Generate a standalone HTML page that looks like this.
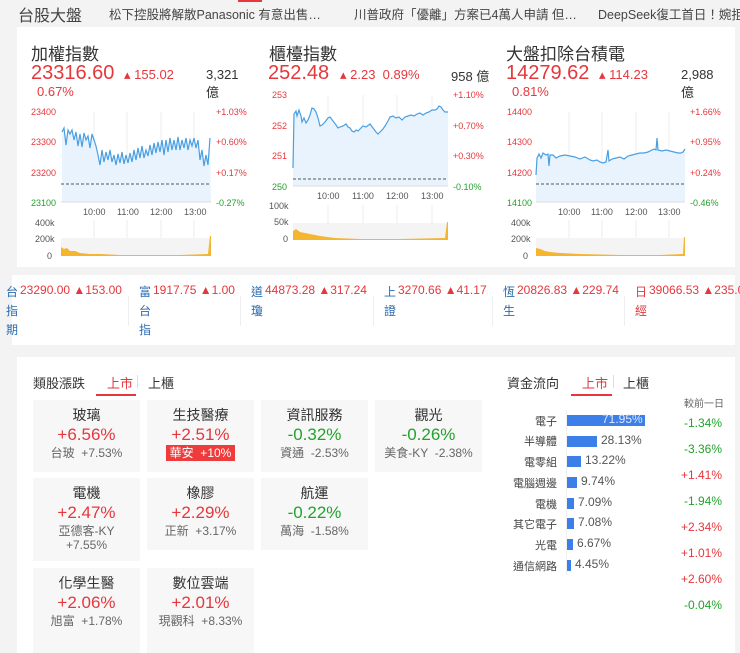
<!DOCTYPE html>
<html><head><meta charset="utf-8">
<style>
*{margin:0;padding:0;box-sizing:border-box}
body{width:740px;height:653px;overflow:hidden;background:#f3f3f3;font-family:"Liberation Sans","Noto Sans CJK TC",sans-serif;position:relative;color:#333}
.a{position:absolute;white-space:nowrap}
.card{position:absolute;background:#fff}
.r{color:#e5373c}.g{color:#22a22b}.bl{color:#2a6bb0}
.t{font-size:17px;color:#333}
.big{font-size:20px;color:#e5373c}
.sm{font-size:13px}
.tile{position:absolute;background:#f7f7f7;width:107px;text-align:center}
.tile .n{font-size:14px;color:#333;margin-top:6px;line-height:18px}
.tile .p{font-size:17px;line-height:22px}
.tile .s{font-size:12px;color:#666;line-height:14px}
.lab{position:absolute;right:183px;font-size:11px;color:#444;text-align:right}
.bar{position:absolute;left:567px;height:11px;background:#3d7fe8}
.bv{position:absolute;font-size:12px;color:#555}
.cv{position:absolute;right:18px;font-size:12px}
</style></head><body>
<div class="a" style="left:238px;top:0;width:24px;height:2px;background:#e5373c"></div>
<div class="a" style="left:18px;top:2px;font-size:16px;color:#444">台股大盤</div>
<div class="a" style="left:109px;top:4px;font-size:12.5px;color:#444">松下控股將解散Panasonic 有意出售…</div>
<div class="a" style="left:354px;top:4px;font-size:12.5px;color:#444">川普政府「優離」方案已4萬人申請 但…</div>
<div class="a" style="left:598px;top:4px;font-size:12.5px;color:#444">DeepSeek復工首日！婉拒</div>

<div class="card" style="left:17px;top:27px;width:718px;height:240px"></div>

<div class="a t" style="left:31px;top:40px">加權指數</div>
<div class="a big" style="left:31px;top:62px">23316.60</div>
<div class="a sm r" style="left:124px;top:67px">▴ 155.02</div>
<div class="a sm r" style="left:37px;top:84px">0.67%</div>
<div class="a sm" style="left:206px;top:66px;line-height:18px">3,321<br>億</div>
<div class="a t" style="left:269px;top:40px">櫃檯指數</div>
<div class="a big" style="left:268px;top:62px">252.48</div>
<div class="a sm r" style="left:340px;top:67px">▴ 2.23&nbsp;&nbsp;0.89%</div>
<div class="a sm" style="left:451px;top:66px">958 億</div>
<div class="a t" style="left:506px;top:40px">大盤扣除台積電</div>
<div class="a big" style="left:506px;top:62px">14279.62</div>
<div class="a sm r" style="left:599px;top:67px">▴ 114.23</div>
<div class="a sm r" style="left:512px;top:84px">0.81%</div>
<div class="a sm" style="left:681px;top:66px;line-height:18px">2,988<br>億</div>

<svg class="a" style="left:0;top:0" width="740" height="270" font-family="Liberation Sans" font-size="9">
<g>
<g stroke="#eee" stroke-width="1"><line x1="94" y1="112" x2="94" y2="202"/><line x1="127" y1="112" x2="127" y2="202"/><line x1="161" y1="112" x2="161" y2="202"/><line x1="194" y1="112" x2="194" y2="202"/><line x1="94" y1="220" x2="94" y2="256"/><line x1="127" y1="220" x2="127" y2="256"/><line x1="161" y1="220" x2="161" y2="256"/><line x1="194" y1="220" x2="194" y2="256"/></g>
<polygon fill="#e9f3fd" points="62,202 62,132 64,128 66,145 68,130 70,134 72,130 74,140 76,132 78,146 80,134 82,147 84,133 86,140 88,136 90,148 92,134 94,140 96,146 98,155 100,165 102,150 104,162 106,152 108,160 110,150 112,162 114,155 116,165 118,154 120,163 122,152 124,164 126,155 128,163 130,153 132,162 134,150 136,160 138,148 140,158 142,146 144,158 146,150 148,156 150,145 152,155 154,143 156,153 158,142 160,152 162,140 164,155 166,140 168,152 170,138 172,150 174,140 176,150 178,137 180,150 182,140 184,148 186,138 188,150 190,140 192,146 194,138 196,148 198,140 200,160 202,150 204,166 206,155 208,165 210,138 211,202"/>
<polyline fill="none" stroke="#4a9fe2" stroke-width="1.2" points="62,132 64,128 66,145 68,130 70,134 72,130 74,140 76,132 78,146 80,134 82,147 84,133 86,140 88,136 90,148 92,134 94,140 96,146 98,155 100,165 102,150 104,162 106,152 108,160 110,150 112,162 114,155 116,165 118,154 120,163 122,152 124,164 126,155 128,163 130,153 132,162 134,150 136,160 138,148 140,158 142,146 144,158 146,150 148,156 150,145 152,155 154,143 156,153 158,142 160,152 162,140 164,155 166,140 168,152 170,138 172,150 174,140 176,150 178,137 180,150 182,140 184,148 186,138 188,150 190,140 192,146 194,138 196,148 198,140 200,160 202,150 204,166 206,155 208,165 210,138"/>
<line x1="61" y1="184" x2="211" y2="184" stroke="#555" stroke-dasharray="3,2"/>
<line x1="61" y1="202" x2="211" y2="202" stroke="#ddd"/>
<g fill="#e5373c"><text x="31" y="115">23400</text><text x="31" y="145">23300</text><text x="31" y="176">23200</text><text x="216" y="115">+1.03%</text><text x="216" y="145">+0.60%</text><text x="216" y="176">+0.17%</text></g>
<g fill="#22a22b"><text x="31" y="206">23100</text><text x="216" y="206">-0.27%</text></g>
<g fill="#555"><text x="83" y="215">10:00</text><text x="117" y="215">11:00</text><text x="150" y="215">12:00</text><text x="184" y="215">13:00</text><text x="35" y="226">400k</text><text x="35" y="242">200k</text><text x="47" y="259">0</text></g>
<rect x="61" y="238" width="150" height="17" fill="#f4f4f4"/>
<polygon fill="#f5b52e" points="61,256 61,247 64,249 67,248 70,251 75,251 80,253 90,254 100,254 120,255 150,255 180,255 208,254 210,236 211,236 211,256"/>
</g>
<g>
<g stroke="#eee"><line x1="328" y1="95" x2="328" y2="186"/><line x1="363" y1="95" x2="363" y2="186"/><line x1="397" y1="95" x2="397" y2="186"/><line x1="432" y1="95" x2="432" y2="186"/><line x1="328" y1="205" x2="328" y2="240"/><line x1="363" y1="205" x2="363" y2="240"/><line x1="397" y1="205" x2="397" y2="240"/><line x1="432" y1="205" x2="432" y2="240"/></g>
<polygon fill="#e9f3fd" points="293,186 293,168 294,114 296,111 297,116 299,110 301,116 302,122 304,118 306,123 308,120 310,115 312,108 314,109 316,112 318,118 320,126 322,125 325,122 328,118 330,117 333,121 336,125 338,128 340,127 343,126 346,124 348,127 350,128 352,131 354,132 356,130 358,131 360,129 363,126 366,127 370,124 373,128 376,132 378,134 380,132 383,129 385,126 388,121 390,117 393,116 396,118 399,117 402,120 405,117 408,116 411,115 414,116 417,114 420,113 423,115 426,113 429,112 432,110 435,110 437,109 439,106 441,107 443,110 445,112 448,112 448,186"/>
<polyline fill="none" stroke="#4a9fe2" stroke-width="1.2" points="293,168 294,114 296,111 297,116 299,110 301,116 302,122 304,118 306,123 308,120 310,115 312,108 314,109 316,112 318,118 320,126 322,125 325,122 328,118 330,117 333,121 336,125 338,128 340,127 343,126 346,124 348,127 350,128 352,131 354,132 356,130 358,131 360,129 363,126 366,127 370,124 373,128 376,132 378,134 380,132 383,129 385,126 388,121 390,117 393,116 396,118 399,117 402,120 405,117 408,116 411,115 414,116 417,114 420,113 423,115 426,113 429,112 432,110 435,110 437,109 439,106 441,107 443,110 445,112 448,112"/>
<line x1="293" y1="179" x2="448" y2="179" stroke="#555" stroke-dasharray="3,2"/>
<line x1="293" y1="186" x2="448" y2="186" stroke="#ddd"/>
<g fill="#e5373c"><text x="272" y="98">253</text><text x="272" y="129">252</text><text x="272" y="159">251</text><text x="453" y="98">+1.10%</text><text x="453" y="129">+0.70%</text><text x="453" y="159">+0.30%</text></g>
<g fill="#22a22b"><text x="272" y="190">250</text><text x="453" y="190">-0.10%</text></g>
<g fill="#555"><text x="317" y="199">10:00</text><text x="352" y="199">11:00</text><text x="386" y="199">12:00</text><text x="421" y="199">13:00</text><text x="269" y="209">100k</text><text x="274" y="225">50k</text><text x="283" y="242">0</text></g>
<rect x="293" y="223" width="155" height="17" fill="#f4f4f4"/>
<polygon fill="#f5b52e" points="293,240 293,231 296,229 300,232 305,233 310,234 320,236 335,238 360,239 400,239 445,238 447,222 448,222 448,240"/>
</g>
<g>
<g stroke="#eee"><line x1="569" y1="112" x2="569" y2="202"/><line x1="602" y1="112" x2="602" y2="202"/><line x1="636" y1="112" x2="636" y2="202"/><line x1="669" y1="112" x2="669" y2="202"/><line x1="569" y1="220" x2="569" y2="256"/><line x1="602" y1="220" x2="602" y2="256"/><line x1="636" y1="220" x2="636" y2="256"/><line x1="669" y1="220" x2="669" y2="256"/></g>
<polygon fill="#e9f3fd" points="536,202 536,175 537,158 539,154 541,158 543,153 546,155 548,154 549,166 550,155 553,155 556,158 560,156 565,155 570,156 575,157 580,159 585,157 590,160 593,161 597,160 600,162 603,163 606,162 608,150 609,161 612,159 616,158 620,157 624,159 628,156 632,155 636,154 640,153 644,153 648,152 652,150 654,149 656,150 657,138 658,150 662,151 666,150 670,151 674,152 678,153 681,153 683,152 685,149 685,202"/>
<polyline fill="none" stroke="#4a9fe2" stroke-width="1.2" points="536,175 537,158 539,154 541,158 543,153 546,155 548,154 549,166 550,155 553,155 556,158 560,156 565,155 570,156 575,157 580,159 585,157 590,160 593,161 597,160 600,162 603,163 606,162 608,150 609,161 612,159 616,158 620,157 624,159 628,156 632,155 636,154 640,153 644,153 648,152 652,150 654,149 656,150 657,138 658,150 662,151 666,150 670,151 674,152 678,153 681,153 683,152 685,149"/>
<line x1="536" y1="184" x2="685" y2="184" stroke="#555" stroke-dasharray="3,2"/>
<line x1="536" y1="202" x2="685" y2="202" stroke="#ddd"/>
<g fill="#e5373c"><text x="507" y="115">14400</text><text x="507" y="145">14300</text><text x="507" y="176">14200</text><text x="690" y="115">+1.66%</text><text x="690" y="145">+0.95%</text><text x="690" y="176">+0.24%</text></g>
<g fill="#22a22b"><text x="507" y="206">14100</text><text x="690" y="206">-0.46%</text></g>
<g fill="#555"><text x="558" y="215">10:00</text><text x="591" y="215">11:00</text><text x="625" y="215">12:00</text><text x="658" y="215">13:00</text><text x="511" y="226">400k</text><text x="511" y="242">200k</text><text x="523" y="259">0</text></g>
<rect x="536" y="238" width="149" height="17" fill="#f4f4f4"/>
<polygon fill="#f5b52e" points="536,256 536,248 540,249 545,251 550,252 560,253 580,254 620,255 660,255 683,254 684,237 685,237 685,256"/>
</g>
</svg>

<div class="card" style="left:12px;top:275px;width:723px;height:70px"></div>
<div class="a" style="left:6px;top:283px;font-size:12px;line-height:19px"><span class="bl">台<br>指<br>期</span></div>
<div class="a r" style="left:20px;top:283px;font-size:12px">23290.00 ▲153.00</div>
<div class="a" style="left:139px;top:283px;font-size:12px;line-height:19px"><span class="bl">富<br>台<br>指</span></div>
<div class="a r" style="left:153px;top:283px;font-size:12px">1917.75 ▲1.00</div>
<div class="a" style="left:251px;top:283px;font-size:12px;line-height:19px"><span class="bl">道<br>瓊</span></div>
<div class="a r" style="left:265px;top:283px;font-size:12px">44873.28 ▲317.24</div>
<div class="a" style="left:384px;top:283px;font-size:12px;line-height:19px"><span class="bl">上<br>證</span></div>
<div class="a r" style="left:398px;top:283px;font-size:12px">3270.66 ▲41.17</div>
<div class="a" style="left:503px;top:283px;font-size:12px;line-height:19px"><span class="bl">恆<br>生</span></div>
<div class="a r" style="left:517px;top:283px;font-size:12px">20826.83 ▲229.74</div>
<div class="a" style="left:635px;top:283px;font-size:12px;line-height:19px"><span class="r">日<br>經</span></div>
<div class="a r" style="left:649px;top:283px;font-size:12px">39066.53 ▲235.0</div>
<div class="a" style="left:128px;top:296px;width:1px;height:30px;background:#eee"></div>
<div class="a" style="left:240px;top:296px;width:1px;height:30px;background:#eee"></div>
<div class="a" style="left:373px;top:296px;width:1px;height:30px;background:#eee"></div>
<div class="a" style="left:492px;top:296px;width:1px;height:30px;background:#eee"></div>
<div class="a" style="left:624px;top:296px;width:1px;height:30px;background:#eee"></div>

<div class="card" style="left:17px;top:357px;width:718px;height:296px"></div>
<div class="a" style="left:33px;top:373px;font-size:13px">類股漲跌</div>
<div class="a r" style="left:107px;top:373px;font-size:13px">上市</div>
<div class="a" style="left:137px;top:375px;width:1px;height:13px;background:#ddd"></div>
<div class="a" style="left:148px;top:373px;font-size:13px">上櫃</div>
<div class="a" style="left:96px;top:394px;width:40px;height:2px;background:#e5373c"></div>

<div class="tile" style="left:33px;top:400px;height:72px"><div class="n">玻璃</div><div class="p r">+6.56%</div><div class="s">台玻 &nbsp;+7.53%</div></div>
<div class="tile" style="left:147px;top:400px;height:72px"><div class="n">生技醫療</div><div class="p r">+2.51%</div><div class="s"><span style="background:#ee3b3b;color:#fff;padding:1px 4px">華安 &nbsp;+10%</span></div></div>
<div class="tile" style="left:261px;top:400px;height:72px"><div class="n">資訊服務</div><div class="p g">-0.32%</div><div class="s">資通 &nbsp;-2.53%</div></div>
<div class="tile" style="left:375px;top:400px;height:72px"><div class="n">觀光</div><div class="p g">-0.26%</div><div class="s">美食-KY &nbsp;-2.38%</div></div>
<div class="tile" style="left:33px;top:478px;height:83px"><div class="n">電機</div><div class="p r">+2.47%</div><div class="s">亞德客-KY<br>+7.55%</div></div>
<div class="tile" style="left:147px;top:478px;height:72px"><div class="n">橡膠</div><div class="p r">+2.29%</div><div class="s">正新 &nbsp;+3.17%</div></div>
<div class="tile" style="left:261px;top:478px;height:72px"><div class="n">航運</div><div class="p g">-0.22%</div><div class="s">萬海 &nbsp;-1.58%</div></div>
<div class="tile" style="left:33px;top:568px;height:85px"><div class="n">化學生醫</div><div class="p r">+2.06%</div><div class="s">旭富 &nbsp;+1.78%</div></div>
<div class="tile" style="left:147px;top:568px;height:85px"><div class="n">數位雲端</div><div class="p r">+2.01%</div><div class="s">現觀科 &nbsp;+8.33%</div></div>

<div class="a" style="left:507px;top:373px;font-size:13px">資金流向</div>
<div class="a r" style="left:582px;top:373px;font-size:13px">上市</div>
<div class="a" style="left:613px;top:375px;width:1px;height:13px;background:#ddd"></div>
<div class="a" style="left:623px;top:373px;font-size:13px">上櫃</div>
<div class="a" style="left:571px;top:394px;width:41px;height:2px;background:#e5373c"></div>
<div class="a" style="left:684px;top:395px;font-size:10px;color:#666">較前一日</div>
<div class="a" style="left:566px;top:410px;width:1px;height:165px;background:#f0f0f0"></div>

<div class="lab" style="top:413px">電子</div>
<div class="lab" style="top:433px">半導體</div>
<div class="lab" style="top:454px">電零組</div>
<div class="lab" style="top:475px">電腦週邊</div>
<div class="lab" style="top:496px">電機</div>
<div class="lab" style="top:516px">其它電子</div>
<div class="lab" style="top:537px">光電</div>
<div class="lab" style="top:558px">通信網路</div>

<div class="bar" style="top:415px;width:78px"></div><div class="bv" style="left:602px;top:412px;color:#dfe9fb">71.95%</div>
<div class="bar" style="top:436px;width:30px"></div><div class="bv" style="left:601px;top:433px">28.13%</div>
<div class="bar" style="top:456px;width:14px"></div><div class="bv" style="left:585px;top:453px">13.22%</div>
<div class="bar" style="top:477px;width:10px"></div><div class="bv" style="left:581px;top:474px">9.74%</div>
<div class="bar" style="top:498px;width:7px"></div><div class="bv" style="left:578px;top:495px">7.09%</div>
<div class="bar" style="top:518px;width:7px"></div><div class="bv" style="left:578px;top:515px">7.08%</div>
<div class="bar" style="top:539px;width:6px"></div><div class="bv" style="left:577px;top:536px">6.67%</div>
<div class="bar" style="top:560px;width:4px"></div><div class="bv" style="left:575px;top:557px">4.45%</div>

<div class="cv g" style="top:416px">-1.34%</div>
<div class="cv g" style="top:442px">-3.36%</div>
<div class="cv r" style="top:468px">+1.41%</div>
<div class="cv g" style="top:494px">-1.94%</div>
<div class="cv r" style="top:520px">+2.34%</div>
<div class="cv r" style="top:546px">+1.01%</div>
<div class="cv r" style="top:572px">+2.60%</div>
<div class="cv g" style="top:598px">-0.04%</div>
</body></html>
